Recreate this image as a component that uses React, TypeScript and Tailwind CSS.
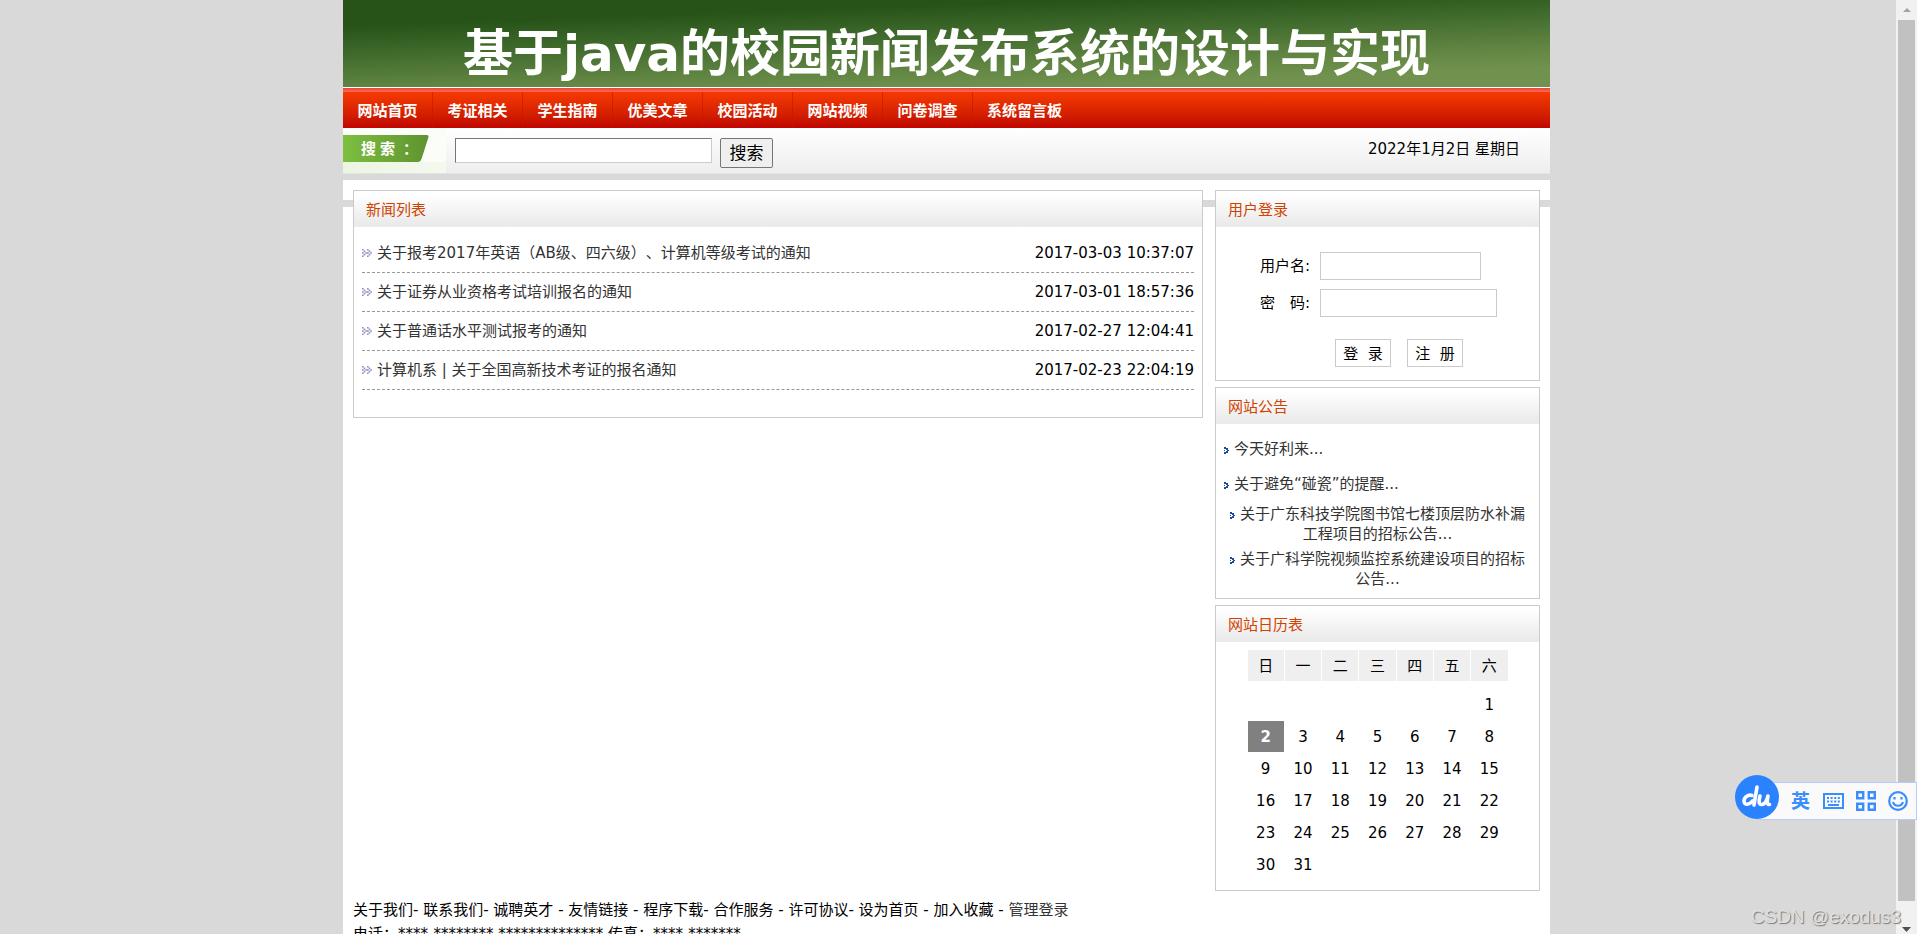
import { useState } from 'react';
import clsx from 'clsx';

const navItems = ['网站首页', '考证相关', '学生指南', '优美文章', '校园活动', '网站视频', '问卷调查', '系统留言板'];

const newsItems = [
  { title: '关于报考2017年英语（AB级、四六级）、计算机等级考试的通知', date: '2017-03-03 10:37:07' },
  { title: '关于证券从业资格考试培训报名的通知', date: '2017-03-01 18:57:36' },
  { title: '关于普通话水平测试报考的通知', date: '2017-02-27 12:04:41' },
  { title: '计算机系 | 关于全国高新技术考证的报名通知', date: '2017-02-23 22:04:19' },
];

const notices = [
  { title: '今天好利来...', long: false },
  { title: '关于避免“碰瓷”的提醒...', long: false },
  { title: '关于广东科技学院图书馆七楼顶层防水补漏工程项目的招标公告...', long: true },
  { title: '关于广科学院视频监控系统建设项目的招标公告...', long: true },
];

const weekDays = ['日', '一', '二', '三', '四', '五', '六'];
const today = 2;

// January 2022 starts on a Saturday
const weeks = Array.from({ length: 6 }, (_, w) =>
  Array.from({ length: 7 }, (_, d) => {
    const day = w * 7 + d - 5;
    return day >= 1 && day <= 31 ? day : null;
  }),
);

function Panel({ title, children }: { title: string; children: React.ReactNode }) {
  return (
    <section className="border border-[#cbcbcb] bg-white">
      <h2 className="h-9 bg-linear-to-b from-white from-10% to-[#ebebeb] to-90% pl-3 leading-[38px] text-[#d14300]">{title}</h2>
      {children}
    </section>
  );
}

function NewsBullet() {
  return (
    <svg className="h-2 w-[10px] shrink-0" viewBox="0 0 6 5" preserveAspectRatio="none" fill="#8f8fc4" aria-hidden="true">
      <path d="M0 0h1v1H0zM3 0h1v1H3zM1 1h1v1H1zM4 1h1v1H4zM0 2h1v1H0zM2 2h1v1H2zM3 2h1v1H3zM5 2h1v1H5zM1 3h1v1H1zM4 3h1v1H4zM0 4h1v1H0zM3 4h1v1H3z" />
    </svg>
  );
}

function NoticeBullet() {
  return (
    <svg className="mr-[5px] inline-block h-[7px] w-[5px] align-baseline" viewBox="0 0 5 7" fill="#1b4aa0" shapeRendering="crispEdges" aria-hidden="true">
      <path d="M0 0h2v2H0zM2 1h2v2H2zM0 3h1v1H0zM3 3h2v1H3zM2 4h2v2H2zM0 5h2v2H0z" />
    </svg>
  );
}

function Header() {
  return (
    <header>
      <div className="h-[87px] bg-[linear-gradient(178deg,#275318_20%,#3f6a2c_42%,#5f8341_67%,#70924e_85%)] pt-6 text-center">
        <h1 className="text-[50px] leading-[60px] font-bold text-white">基于java的校园新闻发布系统的设计与实现</h1>
      </div>
      <div className="mt-px h-1 bg-linear-to-b from-[#e8413c] to-[#ff6a55]" />
      <nav className="flex h-9 bg-linear-to-b from-[#f53a02] to-[#c00400]">
        {navItems.map((item) => (
          <a
            key={item}
            href="#"
            className="h-full w-[90px] border-r border-[#c81400]/60 text-center leading-[38px] font-bold whitespace-nowrap text-white last:w-auto last:border-0 last:pl-[14px]"
          >
            {item}
          </a>
        ))}
      </nav>
    </header>
  );
}

function SearchBar() {
  const [keyword, setKeyword] = useState('');
  return (
    <form className="flex h-[46px] items-start border-b border-[#e4e4e4] bg-linear-to-b from-white to-[#eeeeee]" onSubmit={(e) => e.preventDefault()}>
      <label htmlFor="keyword" className="h-full shrink-0">
        <svg className="h-full w-[103px]" viewBox="0 0 103 45" aria-label="搜索">
          <defs>
            <linearGradient id="tag">
              <stop offset="0" stopColor="#7dbf3f" />
              <stop offset="1" stopColor="#5f9330" />
            </linearGradient>
            <linearGradient id="tagFade">
              <stop offset="0" stopColor="#ebf6e1" />
              <stop offset="1" stopColor="#f4f9ef" />
            </linearGradient>
          </defs>
          <rect width="103" height="45" fill="#fbfdf9" />
          <rect y="34" width="103" height="11" fill="url(#tagFade)" />
          <path d="M0 7h84q2 0 1.500 2l-7 22q-1 3-3 3H0z" fill="url(#tag)" />
          <text x="18 37 60" y="26" fill="#fff" fontSize="15" fontWeight="bold">搜索：</text>
        </svg>
      </label>
      <input
        id="keyword"
        value={keyword}
        onChange={(e) => setKeyword(e.target.value)}
        className="mt-[10px] ml-[9px] h-[25px] w-[257px] border border-[#cfcbc4] border-t-[#767676] border-l-[#767676] bg-white px-1"
      />
      <button type="submit" className="mt-[10px] ml-2 h-[30px] w-[53px] rounded-xs border border-[#767676] bg-[#efefef] text-[17px]">
        搜索
      </button>
      <span className="mt-[11px] mr-[30px] ml-auto">2022年1月2日 星期日</span>
    </form>
  );
}

function LoginPanel() {
  return (
    <Panel title="用户登录">
      <form className="h-[153px] pt-[25px] pl-11" onSubmit={(e) => e.preventDefault()}>
        <div className="flex items-center">
          <label htmlFor="username" className="w-[60px]">用户名:</label>
          <input id="username" className="h-7 w-[161px] border border-[#cbcbcb] px-1" />
        </div>
        <div className="mt-[9px] flex items-center">
          <label htmlFor="password" className="w-[60px]">密　码:</label>
          <input id="password" type="password" className="h-7 w-[177px] border border-[#cbcbcb] px-1" />
        </div>
        <div className="mt-[22px] flex gap-4 pl-[75px]">
          <button type="submit" className="h-7 w-14 border border-[#cbcbcb] bg-white pt-[2px]">登&nbsp;&nbsp;录</button>
          <button type="button" className="h-7 w-14 border border-[#cbcbcb] bg-white pt-[2px]">注&nbsp;&nbsp;册</button>
        </div>
      </form>
    </Panel>
  );
}

function NoticePanel() {
  return (
    <Panel title="网站公告">
      <ul className="pt-2 pb-[6px] text-[#333]">
        {notices.map((n) => (
          <li key={n.title} className={clsx(n.long ? 'px-3 pt-[2px] pb-[3px] text-center leading-5' : 'pl-2 leading-[35px]')}>
            <NoticeBullet />
            <a href="#">{n.title}</a>
          </li>
        ))}
      </ul>
    </Panel>
  );
}

function CalendarPanel() {
  return (
    <Panel title="网站日历表">
      <table className="mx-auto mt-[7px] mb-[9px] w-[262px] table-fixed border-separate border-spacing-px text-center">
        <thead>
          <tr>
            {weekDays.map((d) => (
              <th key={d} className="h-[31px] bg-[#efefef] p-0 font-normal">{d}</th>
            ))}
          </tr>
        </thead>
        <tbody>
          {weeks.map((week, w) => (
            <tr key={w}>
              {week.map((day, d) => (
                <td
                  key={d}
                  className={clsx(
                    w === 0 ? 'h-[38px] p-0 pt-[7px]' : 'h-[31px] p-0',
                    day === today && 'bg-[#808080] font-bold text-white',
                  )}
                >
                  {day}
                </td>
              ))}
            </tr>
          ))}
        </tbody>
      </table>
    </Panel>
  );
}

function ImeBar() {
  return (
    <div className="absolute top-[775px] right-0 flex items-start text-[#3a8dff]">
      <svg className="z-10 h-11 w-11" viewBox="0 0 44 44" aria-hidden="true">
        <circle cx="22" cy="22" r="22" fill="#2b82ff" />
        <g fill="none" stroke="#fff" strokeWidth="3.600" strokeLinecap="round" strokeLinejoin="round">
          <path d="M17 20.500c-4-1.500-8 2-8 5.500 0 4.500 5.500 4 8.500 0" />
          <path d="M22 12l-3 18" />
          <path d="M25 21c-1 4-2 9 2 8.500 3-.5 5-4 6-8.500-1 4-1.500 8.500 1.500 8.500" />
        </g>
      </svg>
      <div className="mt-[7px] -ml-[22px] flex h-[38px] w-[160px] items-center gap-3 border border-[#b0cffc] bg-[#fafafa] pl-[33px]">
        <span className="w-5 text-[19px] leading-5 font-bold">英</span>
        <svg className="h-5 w-[21px]" viewBox="0 0 21 20" aria-hidden="true">
          <rect x="1" y="3" width="19" height="14" fill="none" stroke="currentColor" strokeWidth="2" />
          <path d="M4 7h13M4 10.500h13" stroke="currentColor" strokeWidth="2" strokeDasharray="2 1.600" />
          <path d="M5 14h11" stroke="currentColor" strokeWidth="2" />
        </svg>
        <svg className="h-5 w-5" viewBox="0 0 20 20" fill="none" stroke="currentColor" strokeWidth="2.400" aria-hidden="true">
          <path d="M1.200 1.200h6v6h-6zM12.800 1.200h6v6h-6zM1.200 12.800h6v6h-6zM12.800 12.800h6v6h-6z" />
        </svg>
        <svg className="h-5 w-5" viewBox="0 0 20 20" fill="none" stroke="currentColor" strokeWidth="2.200" aria-hidden="true">
          <circle cx="10" cy="10" r="8.800" />
          <path d="M5 11c1.500 5 8.500 5 10 0" />
          <path d="M6.500 6v2.500M13.500 6v2.500" />
        </svg>
      </div>
    </div>
  );
}

function ScrollTrack() {
  return (
    <div className="flex w-[21px] shrink-0 flex-col items-center bg-[#f1f1f1]" aria-hidden="true">
      <svg className="my-2 h-1 w-2 shrink-0" viewBox="0 0 8 4" fill="#a3a3a3"><path d="M4 0l4 4H0z" /></svg>
      <div className="w-[17px] flex-1 bg-[#c1c1c1]" />
      <svg className="mt-[26px] mb-[2px] h-[5px] w-[9px] shrink-0" viewBox="0 0 9 5" fill="#505050"><path d="M0 0h9L4.500 5z" /></svg>
    </div>
  );
}

export default function App() {
  return (
    <div className="relative flex h-screen overflow-hidden bg-[#d9d9d9] font-['DejaVu_Sans','Noto_Sans_CJK_SC',sans-serif] text-[15px] leading-5 text-black [text-spacing-trim:space-all]">
      <div className="flex-1 pr-[3px]">
        <div className="mx-auto w-full max-w-[1207px] bg-white">
          <Header />
          <SearchBar />
          {/* the page background shows through as a thin band behind the panels */}
          <div className="border-t-[6px] border-[#d9d9d9] bg-[linear-gradient(#fff_20px,#d9d9d9_20px,#d9d9d9_27px,#fff_27px)] px-[10px] pt-[10px]">
            <div className="flex items-start gap-3">
              <main className="min-w-0 flex-1">
                <Panel title="新闻列表">
                  <ul className="px-2 pt-[7px] pb-[27px]">
                    {newsItems.map((item) => (
                      <li key={item.title} className="flex h-[39px] items-center gap-[5px] border-b border-dashed border-[#999]">
                        <NewsBullet />
                        <a href="#" className="text-[#333]">{item.title}</a>
                        <time className="ml-auto">{item.date}</time>
                      </li>
                    ))}
                  </ul>
                </Panel>
              </main>
              <aside className="flex w-[325px] flex-col gap-[6px]">
                <LoginPanel />
                <NoticePanel />
                <CalendarPanel />
              </aside>
            </div>
            <footer className="pt-[7px] leading-6">
              <p>
                关于我们- 联系我们- 诚聘英才 - 友情链接 - 程序下载- 合作服务 - 许可协议- 设为首页 - 加入收藏 -{' '}
                <a href="#" className="text-[#333]">管理登录</a>
              </p>
              <p>电话：****-******** ************** 传真：****-*******</p>
            </footer>
          </div>
        </div>
      </div>
      <ScrollTrack />
      <ImeBar />
      <div className="absolute right-4 bottom-[5px] font-['Liberation_Sans',sans-serif] text-[19px] leading-6 text-[#e0e0e0] [text-shadow:1px_1px_1px_#777]">
        CSDN @exodus3
      </div>
    </div>
  );
}
